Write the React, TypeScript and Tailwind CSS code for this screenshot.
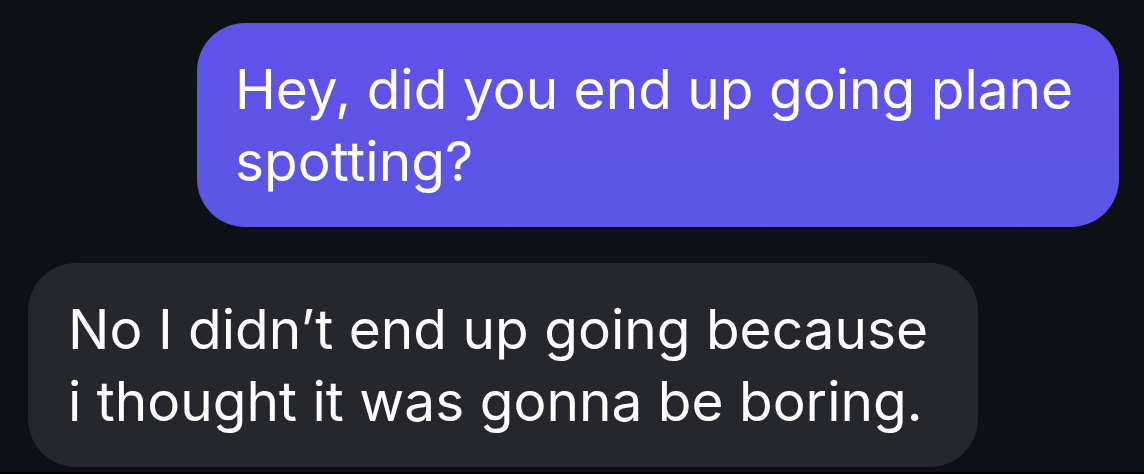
const Bubble = ({ text, mine }: { text: string; mine?: boolean }) => {
    return (
        <div
            className={
                mine
                    ? "self-end mr-[25px] w-[922px] h-[204px] rounded-[48px] bg-gradient-to-b from-[#5f52e9] to-[#5a56e6] pl-[38px] pr-[30px] py-[30px] text-white"
                    : "self-start ml-[28px] w-[950px] h-[204px] rounded-[48px] bg-[#25272c] pl-[40px] pr-[30px] py-[30px] text-white"
            }
        >
            <p className="text-[55px] leading-[72px] font-['Inter',sans-serif]">{text}</p>
        </div>
    );
};

const App = () => {
    return (
        <div className="w-[1144px] h-[474px] bg-[#0d1015] flex flex-col gap-[36px] pt-[23px] overflow-hidden border-b-2 border-black">
            <Bubble mine text="Hey, did you end up going plane spotting?" />
            <Bubble text={"No I didn\u2019t end up going because i thought it was gonna be boring."} />
        </div>
    );
};

export default App;
